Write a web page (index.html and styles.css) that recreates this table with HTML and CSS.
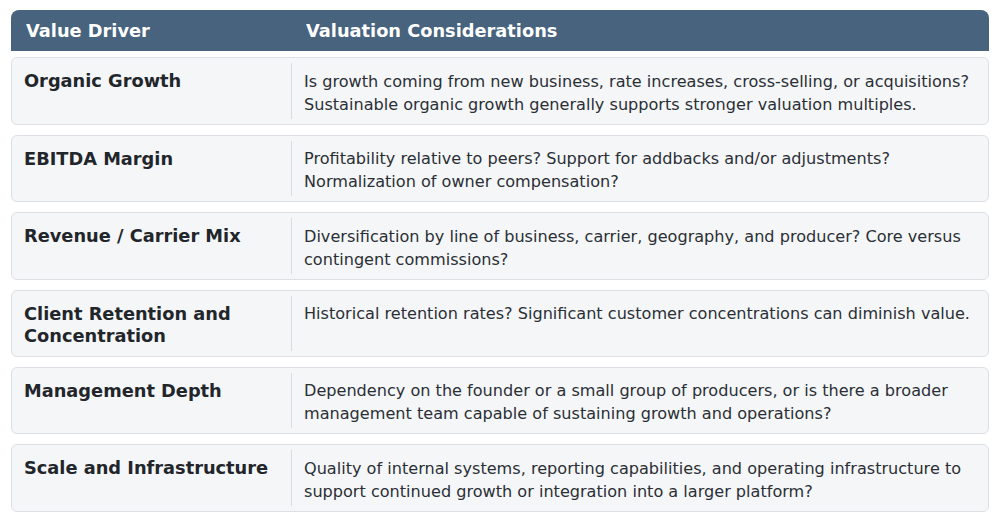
FILE: index.html
```html
<!DOCTYPE html>
<html>
<head>
<meta charset="utf-8">
<link rel="stylesheet" href="styles.css">
</head>
<body>
<div class="table">
  <div class="head">
    <div class="hcell">Value Driver</div>
    <div class="hcell">Valuation Considerations</div>
  </div>
  <div class="rows">
    <div class="row">
      <div class="driver">Organic Growth</div>
      <div class="desc">Is growth coming from new business, rate increases, cross-selling, or acquisitions? Sustainable organic growth generally supports stronger valuation multiples.</div>
    </div>
    <div class="row">
      <div class="driver">EBITDA Margin</div>
      <div class="desc">Profitability relative to peers? Support for addbacks and/or adjustments? Normalization of owner compensation?</div>
    </div>
    <div class="row">
      <div class="driver">Revenue / Carrier Mix</div>
      <div class="desc">Diversification by line of business, carrier, geography, and producer? Core versus contingent commissions?</div>
    </div>
    <div class="row">
      <div class="driver">Client Retention and Concentration</div>
      <div class="desc">Historical retention rates? Significant customer concentrations can diminish value.</div>
    </div>
    <div class="row">
      <div class="driver">Management Depth</div>
      <div class="desc">Dependency on the founder or a small group of producers, or is there a broader management team capable of sustaining growth and operations?</div>
    </div>
    <div class="row">
      <div class="driver">Scale and Infrastructure</div>
      <div class="desc">Quality of internal systems, reporting capabilities, and operating infrastructure to support continued growth or integration into a larger platform?</div>
    </div>
  </div>
</div>
</body>
</html>
```
FILE: styles.css
```css
html, body {
  margin: 0;
  padding: 0;
  background: #ffffff;
}
body {
  font-family: "DejaVu Sans", sans-serif;
  color: #2a2f35;
}
.table {
  padding: 10px 11px;
}
.head {
  display: grid;
  grid-template-columns: 280px 1fr;
  background: #47637e;
  border-radius: 8px 8px 0 0;
  height: 41px;
  align-items: center;
}
.hcell {
  color: #ffffff;
  font-weight: bold;
  font-size: 17.8px;
  padding: 0 15px;
}
.rows {
  display: flex;
  flex-direction: column;
  gap: 10px;
  margin-top: 6px;
}
.row {
  display: grid;
  grid-template-columns: 279px 1fr;
  background: #f5f6f8;
  border: 1px solid #dcdfe4;
  border-radius: 6px;
  padding: 5px 0;
}
.driver {
  font-weight: bold;
  font-size: 17.8px;
  line-height: 22.5px;
  color: #22262b;
  padding: 7px 12px 3px;
}
.desc {
  border-left: 1px solid #d8dbe0;
  font-size: 16.1px;
  line-height: 23px;
  padding: 6.5px 12px 3.1px;
  color: #2a2f35;
}
```
